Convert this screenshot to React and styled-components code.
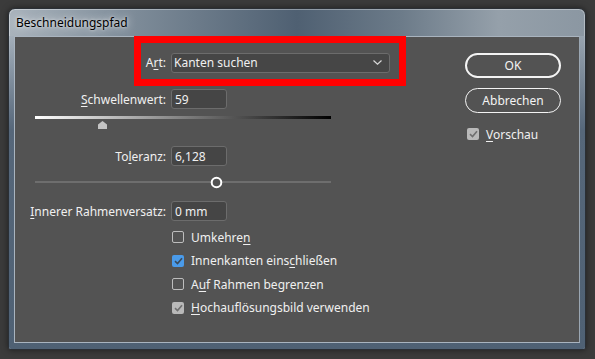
import React from "react";
import styled, { createGlobalStyle } from "styled-components";

const GlobalStyle = createGlobalStyle`
  html, body {
    margin: 0;
    padding: 0;
    background: #3b3b3b;
  }
  body {
    font-family: "Noto Sans", "Open Sans", sans-serif;
    font-size: 12px;
  }
`;

const Page = styled.div`
  width: 595px;
  height: 359px;
  padding: 8px 0 0 8px;
  box-sizing: border-box;
`;

const Window = styled.div`
  width: 578px;
  height: 342px;
  border-radius: 7px 7px 3px 3px;
  border: 1px solid #2a2f35;
  box-sizing: border-box;
  background: linear-gradient(90deg, #a9b3bc 0%, #7d8b98 22%, #4f6072 50%, #6c7b89 68%, #95a0aa 85%, #8b97a2 100%);
  box-shadow: 0 0 6px rgba(0, 0, 0, 0.5), inset 0 0 0 1px rgba(255, 255, 255, 0.35);
  display: flex;
  flex-direction: column;
  overflow: hidden;
`;

const TitleBar = styled.div`
  height: 27px;
  padding-left: 7px;
  display: flex;
  align-items: center;
  color: #000;
  font-family: "Noto Sans", sans-serif;
  font-size: 12px;
  text-shadow: 0 0 8px rgba(255, 255, 255, 0.9), 0 0 3px rgba(255, 255, 255, 0.7);
`;

const FrameBody = styled.div`
  flex: 1;
  padding: 0 5px 6px 5px;
  background: linear-gradient(180deg, rgba(160, 172, 184, 0.6) 0%, #56677a 30%, #4f6174 100%);
  display: flex;
`;

const Content = styled.div`
  flex: 1;
  background: #535353;
  border: 1px solid #a9b4bf;
  border-right-color: #9aa6b2;
  display: flex;
  color: #f0f0f0;
  position: relative;
`;

const LeftColumn = styled.div`
  width: 450px;
  display: flex;
  flex-direction: column;
`;

const RightColumn = styled.div`
  width: 96px;
  padding-top: 16px;
  display: flex;
  flex-direction: column;
  gap: 10px;
`;

const Highlight = styled.div`
  margin-left: 119px;
  width: 272px;
  height: 50px;
  box-sizing: border-box;
  border: 7px solid #ff0000;
  margin-top: -1px;
  display: flex;
  align-items: center;
  padding-top: 3px;
  gap: 5px;
`;

const Label = styled.span`
  width: ${({ $w }) => $w || 151}px;
  text-align: right;
  white-space: nowrap;
  flex-shrink: 0;
`;

const Key = styled.span`
  text-decoration: underline;
  text-underline-offset: 2px;
`;

const Dropdown = styled.div`
  width: 219px;
  height: 20px;
  box-sizing: border-box;
  border: 1px solid #6c6c6c;
  border-radius: 3px;
  background: #464646;
  display: flex;
  align-items: center;
  justify-content: space-between;
  padding: 0 7px 0 2px;
`;

const FieldRow = styled.div`
  display: flex;
  align-items: center;
  gap: 5px;
  margin-top: ${({ $mt }) => $mt || 0}px;
`;

const Input = styled.div`
  width: 56px;
  height: 20px;
  box-sizing: border-box;
  border: 1px solid #6c6c6c;
  border-radius: 3px;
  background: #454545;
  padding-left: 3px;
  display: flex;
  align-items: center;
`;

const Slider = styled.div`
  position: relative;
  margin-left: 20px;
  width: 296px;
  height: ${({ $h }) => $h}px;
  margin-top: ${({ $mt }) => $mt || 0}px;
`;

const GradientTrack = styled.div`
  height: 3px;
  background: linear-gradient(90deg, #ffffff 0%, #9a9a9a 40%, #000000 100%);
`;

const LineTrack = styled.div`
  position: absolute;
  left: 0;
  right: 0;
  top: 5px;
  height: 2px;
  background: #6e6e6e;
`;

const ArrowThumb = styled.svg`
  position: absolute;
  top: 5px;
  left: 63px;
`;

const CircleThumb = styled.svg`
  position: absolute;
  top: 0;
  left: 175px;
`;

const CheckList = styled.div`
  display: flex;
  flex-direction: column;
  gap: 7.5px;
  margin-top: 8px;
  padding-left: 157px;
`;

const CheckRow = styled.div`
  display: flex;
  align-items: center;
  gap: 7px;
  height: 16px;
  padding-left: ${({ $pl }) => $pl || 0}px;
  margin-top: ${({ $mt }) => $mt || 0}px;
`;

const Box = styled.span`
  width: 12px;
  height: 12px;
  box-sizing: border-box;
  border-radius: 2px;
  border: 1px solid ${({ $state }) => ($state === "off" ? "#bdbdbd" : "transparent")};
  background: ${({ $state }) =>
    $state === "blue" ? "#4a9bea" : $state === "gray" ? "#b9b9b9" : "transparent"};
  display: flex;
  align-items: center;
  justify-content: center;
  flex-shrink: 0;
`;

const Button = styled.div`
  height: 25px;
  box-sizing: border-box;
  border: ${({ $primary }) => ($primary ? "2px" : "1px")} solid #f4f4f4;
  border-radius: 13px;
  display: flex;
  align-items: center;
  justify-content: center;
  color: #f4f4f4;
`;

const Check = ({ color }) => (
  <svg width="9" height="8" viewBox="0 0 9 8">
    <path d="M1 4.2 L3.5 6.5 L8 1.2" fill="none" stroke={color} strokeWidth="1.6" />
  </svg>
);

const CheckBox = ({ state, children, pl, mt }) => (
  <CheckRow $pl={pl} $mt={mt}>
    <Box $state={state}>
      {state === "blue" && <Check color="#3a4a5a" />}
      {state === "gray" && <Check color="#6f6f6f" />}
    </Box>
    <span>{children}</span>
  </CheckRow>
);

export default function App() {
  return (
    <Page>
      <GlobalStyle />
      <Window>
        <TitleBar>Beschneidungspfad</TitleBar>
        <FrameBody>
          <Content>
            <LeftColumn>
              <Highlight>
                <Label $w={25}>
                  A<Key>r</Key>t:
                </Label>
                <Dropdown>
                  <span>Kanten suchen</span>
                  <svg width="9" height="5" viewBox="0 0 9 5">
                    <path d="M0.5 0.5 L4.5 4.2 L8.5 0.5" fill="none" stroke="#d8d8d8" strokeWidth="1.2" />
                  </svg>
                </Dropdown>
              </Highlight>
              <FieldRow $mt={3}>
                <Label>
                  <Key>S</Key>chwellenwert:
                </Label>
                <Input>59</Input>
              </FieldRow>
              <Slider $h={14} $mt={7}>
                <GradientTrack />
                <ArrowThumb width="9" height="8" viewBox="0 0 9 8">
                  <path d="M0 3.5 L4.5 0 L9 3.5 L9 8 L0 8 Z" fill="#c4c4c4" />
                </ArrowThumb>
              </Slider>
              <FieldRow $mt={16}>
                <Label>
                  To<Key>l</Key>eranz:
                </Label>
                <Input>6,128</Input>
              </FieldRow>
              <Slider $h={12} $mt={10}>
                <LineTrack />
                <CircleThumb width="13" height="13" viewBox="0 0 13 13">
                  <circle cx="6.5" cy="6.5" r="4.8" fill="#535353" stroke="#ffffff" strokeWidth="2" />
                </CircleThumb>
              </Slider>
              <FieldRow $mt={13}>
                <Label>
                  <Key>I</Key>nnerer Rahmenversatz:
                </Label>
                <Input>0 mm</Input>
              </FieldRow>
              <CheckList>
                <CheckBox state="off">
                  Umkehre<Key>n</Key>
                </CheckBox>
                <CheckBox state="blue">
                  Innenkanten eins<Key>c</Key>hließen
                </CheckBox>
                <CheckBox state="off">
                  A<Key>u</Key>f Rahmen begrenzen
                </CheckBox>
                <CheckBox state="gray">
                  <Key>H</Key>ochauflösungsbild verwenden
                </CheckBox>
              </CheckList>
            </LeftColumn>
            <RightColumn>
              <Button $primary>OK</Button>
              <Button>Abbrechen</Button>
              <CheckBox state="gray" pl={2} mt={3}>
                <Key>V</Key>orschau
              </CheckBox>
            </RightColumn>
          </Content>
        </FrameBody>
      </Window>
    </Page>
  );
}
